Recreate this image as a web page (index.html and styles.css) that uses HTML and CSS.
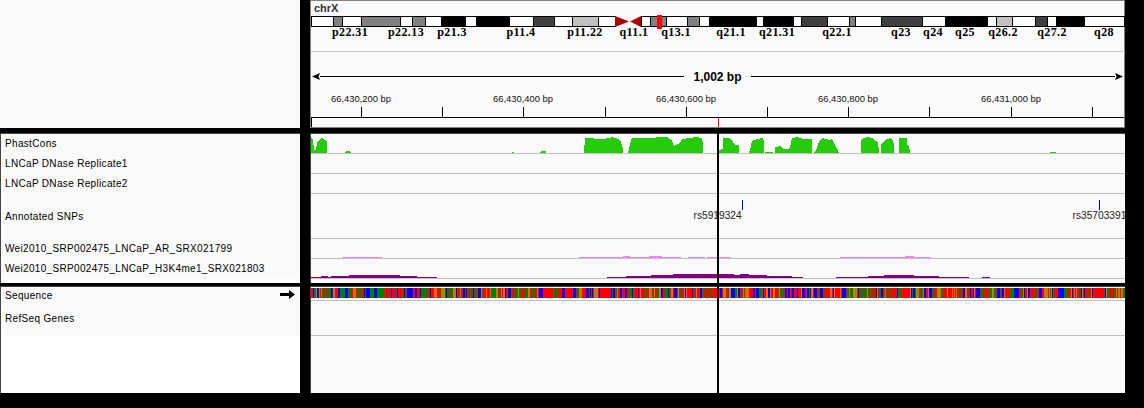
FILE: index.html
```html
<!DOCTYPE html>
<html lang="en">
<head>
    <meta charset="UTF-8">
    <meta name="viewport" content="width=device-width, initial-scale=1.0">
    <title>Genome Browser - chrX</title>
    <link rel="stylesheet" href="styles.css">
</head>
<body>
    <div class="browser">
        <div class="row row-header">
            <div class="names"></div>
            <div class="data header-data">
                <div class="chrom-name">chrX</div>
                <svg id="ideogram" class="ideogram" width="814" height="24" viewBox="311 15 814 24"></svg>
                <div class="span-row">
                    <svg class="span-arrow" width="8" height="7" viewBox="0 0 8 7"><path d="M0 3.5 8 0 6.5 3.5 8 7z"/></svg>
                    <span class="span-line"></span>
                    <span class="span-label">1,002 bp</span>
                    <span class="span-line"></span>
                    <svg class="span-arrow" width="8" height="7" viewBox="0 0 8 7"><path d="M8 3.5 0 0 1.5 3.5 0 7z"/></svg>
                </div>
                <svg id="ruler" class="ruler" width="814" height="23" viewBox="311 94 814 23"></svg>
                <div class="locus-box"><span class="locus-mark"></span></div>
            </div>
        </div>

        <div class="row row-tracks">
            <div class="names">
                <div class="name h20">PhastCons</div>
                <div class="name h20">LNCaP DNase Replicate1</div>
                <div class="name h20">LNCaP DNase Replicate2</div>
                <div class="name h45">Annotated SNPs</div>
                <div class="name h20">Wei2010_SRP002475_LNCaP_AR_SRX021799</div>
                <div class="name h20">Wei2010_SRP002475_LNCaP_H3K4me1_SRX021803</div>
            </div>
            <div class="data">
                <div class="track h20">
                    <svg width="814" height="19" viewBox="311 134 814 19">
                        <g fill="#26cc0c" shape-rendering="crispEdges">
                            <polygon points="311,153 311,138 313,140 314,150 316,150 317,143 320,139 322,138 325,140 327,142 327,153"/>
                            <polygon points="345,153 345,152 347,151 349,151 351,152 351,153"/>
                            <rect x="512" y="152" width="2" height="1"/>
                            <polygon points="540,153 540,152 542,151 546,151 546,153"/>
                            <polygon points="584,153 585,138 602,139 609,138 612,137 618,139 621,142 623,148 623,153"/>
                            <polygon points="628,153 630,144 632,138 653,138 658,137 667,137 672,140 674,146 680,143 682,139 690,138 696,137 702,138 703,144 703,153"/>
                            <polygon points="719,153 719,150 723,149 723,138 730,138 733,142 735,145 739,145 739,153"/>
                            <polygon points="749,153 750,150 752,141 757,139 763,138 764,141 764,153"/>
                            <rect x="765" y="152" width="8" height="1"/>
                            <polygon points="775,153 775,147 780,146 783,149 788,149 790,148 792,138 797,137 803,139 812,139 812,153"/>
                            <polygon points="814,153 816,150 819,142 822,138 826,139 829,140 832,139 835,145 838,150 839,153"/>
                            <polygon points="861,153 861,140 864,138 868,137 872,138 876,141 878,142 879,152 879,153"/>
                            <polygon points="881,153 881,145 884,141 887,139 890,138 893,140 894,146 894,153"/>
                            <polygon points="899,153 899,138 907,138 907,145 909,146 910,151 910,153"/>
                            <rect x="1050" y="152" width="6" height="1"/>
                        </g>
                    </svg>
                </div>
                <div class="track h20"></div>
                <div class="track h20"></div>
                <div class="track h45">
                    <svg width="814" height="44" viewBox="311 194 814 44">
                        <rect x="742" y="200" width="1" height="10" fill="#0000c0"/>
                        <rect x="1099" y="200" width="1" height="10" fill="#000080"/>
                        <text class="snp-label" x="693.5" y="219">rs5919324</text>
                        <text class="snp-label" x="1072.5" y="219">rs35703391</text>
                    </svg>
                </div>
                <div class="track h20">
                    <svg width="814" height="19" viewBox="311 239 814 19">
                        <g fill="#e48ce4">
                            <rect x="342" y="257" width="40" height="1"/>
                            <rect x="579" y="257" width="102" height="1"/>
                            <rect x="688" y="257" width="17" height="1"/>
                            <rect x="707" y="257" width="24" height="1"/>
                            <rect x="840" y="257" width="91" height="1"/>
                        </g>
                        <g fill="#ff80ff">
                            <rect x="623" y="256" width="7" height="2"/>
                            <rect x="649" y="256" width="13" height="2"/>
                            <rect x="905" y="256" width="9" height="2"/>
                        </g>
                    </svg>
                </div>
                <div class="track h20">
                    <svg width="814" height="19" viewBox="311 259 814 19">
                        <polygon fill="#800080" points="311,278 311,277 321,277 321,276 328,276 328,277 331,277 331,276 349,276 349,275 400,275 400,276 417,276 417,277 437,277 437,278"/>
                        <polygon fill="#800080" points="607,278 607,277 626,277 626,276 651,276 651,275 673,275 673,274 734,274 734,275 740,275 740,274 749,274 749,275 767,275 767,276 792,276 792,277 803,277 803,278"/>
                        <polygon fill="#800080" points="836,278 836,277 868,277 868,276 884,276 884,275 914,275 914,276 939,276 939,277 969,277 969,278"/>
                        <rect fill="#800080" x="982" y="277" width="8" height="1"/>
                    </svg>
                </div>
            </div>
        </div>

        <div class="row row-features">
            <div class="names">
                <div class="name h14 seq-name">
                    <span class="seq-title">Sequence</span>
                    <svg width="15" height="9" viewBox="0 0 15 9"><path d="M0 3h9V0l6 4.5L9 9V6H0z"/></svg>
                </div>
                <div class="name h35">RefSeq Genes</div>
            </div>
            <div class="data">
                <div class="track h14 seq-track">
                    <svg id="sequence" width="814" height="10" viewBox="0 0 814 10" shape-rendering="crispEdges"></svg>
                </div>
                <div class="track h35"></div>
            </div>
        </div>

        <div class="cursor"></div>
    </div>

    <script src="script.js"></script>
</body>
</html>
```

FILE: styles.css
```css
html, body {
    margin: 0;
    background: #000;
}
.browser {
    position: relative;
    width: 1125px;
    font-family: "Liberation Sans", Arial, sans-serif;
}
.row {
    display: flex;
    gap: 10px;
}
.row-header {
    height: 128px;
}
.row-tracks {
    height: 150px;
    margin-top: 5px;
}
.row-features {
    height: 107px;
    margin-top: 3px;
}
.names {
    width: 300px;
    flex: none;
    background: #fff;
    box-sizing: border-box;
}
.row-tracks .names, .row-features .names {
    border-top: 1px solid #444;
    border-left: 1px solid #444;
}
.row-header .names {
    background: #fafafa;
}
.data {
    width: 815px;
    flex: none;
    box-sizing: border-box;
    background: #fafafa;
    border-top: 1px solid #444;
    border-left: 1px solid #444;
}
.header-data {
    border-top-color: #808080;
    border-left-color: #808080;
    border-right: 1px solid #808080;
    border-bottom: 1px solid #808080;
}
.name {
    box-sizing: border-box;
    display: flex;
    align-items: center;
    padding-left: 4px;
    background: #fafafa;
    font-size: 10px;
    letter-spacing: 0.33px;
    color: #000;
    white-space: nowrap;
}
.h20.name {
    padding-bottom: 1px;
}
.seq-name {
    justify-content: space-between;
    padding-right: 5px;
}
.seq-title {
    padding-top: 2px;
}
.seq-name svg {
    display: block;
}
.h14 { height: 14px; }
.h20 { height: 20px; }
.h35 { height: 35px; }
.h45 { height: 45px; }
.track {
    box-sizing: border-box;
    border-bottom: 1px solid #c0c0c0;
    overflow: hidden;
}
.track svg, .ideogram, .ruler {
    display: block;
}
.seq-track {
    padding-top: 1px;
}
.chrom-name {
    height: 14px;
    padding-left: 3px;
    font-size: 11px;
    font-weight: bold;
    line-height: 14px;
    color: #333;
}
.ideogram {
    border-bottom: 1px solid #c8c8c8;
    height: 24px;
    padding-bottom: 12px;
}
.ideogram .band-label {
    font-family: "Liberation Serif", serif;
    font-size: 12px;
    font-weight: bold;
    letter-spacing: 0.4px;
    text-anchor: middle;
}
.span-row {
    display: flex;
    align-items: center;
    height: 16px;
    margin-top: 16px;
    padding: 0 1px;
}
.span-line {
    flex: 1;
    height: 1px;
    background: #000;
}
.span-arrow {
    flex: none;
}
.span-label {
    padding: 2px 9px 0;
    font-size: 12px;
    font-weight: bold;
}
.ruler {
    margin-top: 10px;
}
.ruler text {
    font-size: 9.4px;
    text-anchor: middle;
    fill: #111;
}
.locus-box {
    position: relative;
    box-sizing: border-box;
    height: 10px;
    border-top: 1px solid #000;
    border-left: 1px solid #000;
}
.locus-mark {
    position: absolute;
    left: 406px;
    top: 0;
    width: 1px;
    height: 9px;
    background: #f00;
}
.snp-label {
    font-size: 10.2px;
    fill: #222;
}
.cursor {
    position: absolute;
    left: 717px;
    top: 133px;
    width: 2px;
    height: 260px;
    background: #000;
}
```

FILE: script.js
```js
document.addEventListener('DOMContentLoaded', () => {
    const SVG_NS = 'http://www.w3.org/2000/svg';

    function add(parent, tag, attrs, text) {
        const el = document.createElementNS(SVG_NS, tag);
        Object.keys(attrs).forEach(k => el.setAttribute(k, attrs[k]));
        if (text) el.textContent = text;
        parent.appendChild(el);
        return el;
    }

    // chromosome bands: [start, end, colour]
    const W = '#fff', G = '#808080', D = '#404040', L = '#c0c0c0', K = '#000';
    const bands = [
        [311, 333, W], [333, 342, G], [342, 361, W], [361, 400, G], [400, 412, W],
        [412, 425, G], [425, 441, W], [441, 465, K], [465, 476, W], [476, 509, K],
        [509, 533, W], [533, 554, D], [554, 572, W], [572, 598, L], [598, 615, W],
        [641, 650, W], [650, 666, G], [666, 687, W], [687, 699, G], [699, 709, W],
        [709, 756, K], [756, 763, W], [763, 793, K], [793, 801, W], [801, 827, D],
        [827, 849, W], [849, 855, G], [855, 881, W], [881, 922, D], [922, 945, W],
        [945, 987, K], [987, 996, W], [996, 1012, L], [1012, 1035, W], [1035, 1047, D],
        [1047, 1056, W], [1056, 1084, K], [1084, 1124, W]
    ];
    const labels = [
        ['p22.31', 350], ['p22.13', 406], ['p21.3', 452], ['p11.4', 521], ['p11.22', 585],
        ['q11.1', 634], ['q13.1', 676], ['q21.1', 731], ['q21.31', 777], ['q22.1', 837],
        ['q23', 901], ['q24', 933], ['q25', 965], ['q26.2', 1003], ['q27.2', 1052], ['q28', 1104]
    ];

    const ideogram = document.getElementById('ideogram');
    bands.forEach(b => {
        add(ideogram, 'rect', {
            x: b[0] + 0.5, y: 16.5, width: b[1] - b[0], height: 10,
            fill: b[2], stroke: '#000', 'shape-rendering': 'crispEdges'
        });
    });
    add(ideogram, 'polygon', { points: '615,16 629,21.5 615,27', fill: '#b00000' });
    add(ideogram, 'polygon', { points: '641,16 630,21.5 641,27', fill: '#b00000' });
    add(ideogram, 'rect', { x: 657, y: 14, width: 5, height: 15, fill: '#f00' });
    labels.forEach(l => {
        add(ideogram, 'text', { x: l[1], y: 36, class: 'band-label' }, l[0]);
    });

    // ruler ticks and position labels
    const ruler = document.getElementById('ruler');
    for (let i = 0; i < 10; i++) {
        const x = Math.round(361 + i * 81.2);
        add(ruler, 'rect', { x: x, y: 107, width: 1, height: 10, fill: '#000' });
        if (i % 2 === 0) {
            const bp = 66430200 + i * 100;
            add(ruler, 'text', { x: x, y: 102 }, bp.toLocaleString('en-US') + ' bp');
        }
    }

    // sequence colour bar, one rect per base
    const seq = document.getElementById('sequence');
    const colors = ['#ff0000', '#0000ff', '#008000', '#c87800'];
    const pxPerBase = 814 / 1002;
    let seed = 73;
    let base = 0;
    function next() {
        seed = (seed * 16807) % 2147483647;
        return seed / 2147483647;
    }
    for (let i = 0; i < 1002; i++) {
        // runs of the same base are common, so keep the last one about a third of the time
        if (next() > 0.33) {
            const r = next();
            base = r < 0.38 ? 0 : r < 0.58 ? 1 : r < 0.84 ? 2 : 3;
        }
        add(seq, 'rect', {
            x: (i * pxPerBase).toFixed(2), y: 0,
            width: (pxPerBase + 0.2).toFixed(2), height: 10,
            fill: colors[base]
        });
    }
});
```
